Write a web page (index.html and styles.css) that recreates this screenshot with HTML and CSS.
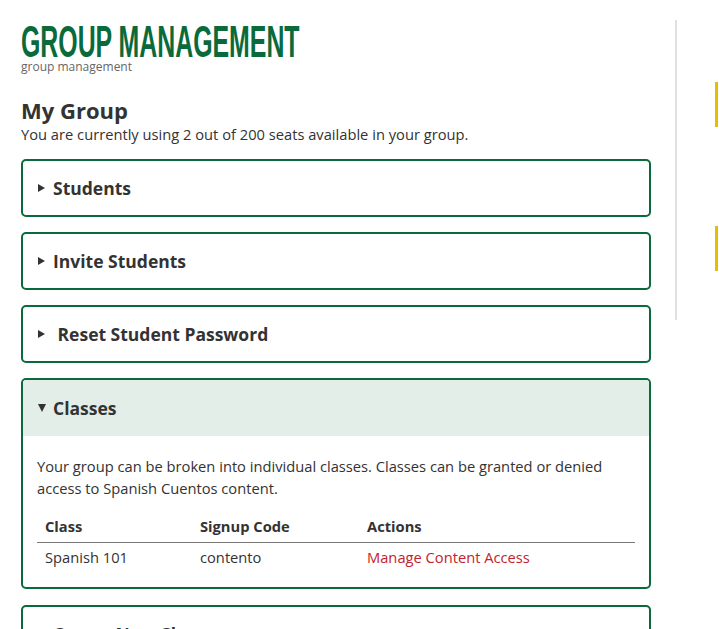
FILE: index.html
```html
<!DOCTYPE html>
<html lang="en">
<head>
    <meta charset="UTF-8">
    <meta name="viewport" content="width=device-width, initial-scale=1.0">
    <title>Group Management</title>
    <link rel="stylesheet" href="styles.css">
</head>
<body>
    <div class="page">
        <div class="main">
            <h1 class="page-title"><span>Group Management</span></h1>
            <div class="page-subtitle">group management</div>

            <h2 class="section-title">My Group</h2>
            <p class="seats">You are currently using 2 out of 200 seats available in your group.</p>

            <details class="panel">
                <summary>Students</summary>
            </details>

            <details class="panel">
                <summary>Invite Students</summary>
            </details>

            <details class="panel">
                <summary>&nbsp;Reset Student Password</summary>
            </details>

            <details class="panel" open>
                <summary>Classes</summary>
                <div class="panel-body">
                    <p>Your group can be broken into individual classes. Classes can be granted or denied access to Spanish Cuentos content.</p>
                    <table class="class-table">
                        <thead>
                            <tr>
                                <th class="col-class">Class</th>
                                <th class="col-code">Signup Code</th>
                                <th>Actions</th>
                            </tr>
                        </thead>
                        <tbody>
                            <tr>
                                <td>Spanish 101</td>
                                <td>contento</td>
                                <td><a href="#">Manage Content Access</a></td>
                            </tr>
                        </tbody>
                    </table>
                </div>
            </details>

            <details class="panel">
                <summary>Create New Class</summary>
            </details>
        </div>

        <div class="sidebar">
            <div class="side-item"></div>
            <div class="side-item"></div>
        </div>
    </div>
</body>
</html>
```

FILE: styles.css
```css
:root {
    --green: #0a6a3b;
    --green-light: #e4eee8;
    --text: #333;
    --muted: #666;
    --red: #c4232b;
    --yellow: #e6bd00;
    --rule: #e0e0e0;
}

* {
    box-sizing: border-box;
}

body {
    margin: 0;
    font-family: 'Open Sans', sans-serif;
    color: var(--text);
    background: #fff;
    overflow: hidden;
}

.page {
    display: flex;
    align-items: flex-start;
    padding: 24px 0 0 21px;
}

.main {
    width: 630px;
    flex-shrink: 0;
}

/* condensed title, no Bebas available so squeeze a narrow face */
.page-title {
    margin: 0;
    font-family: 'Liberation Sans Narrow', 'Liberation Sans', sans-serif;
    font-weight: 700;
    font-size: 44px;
    line-height: 36px;
    height: 36px;
    text-transform: uppercase;
    color: var(--green);
    white-space: nowrap;
}

.page-title span {
    display: inline-block;
    transform: scaleX(0.565);
    transform-origin: left center;
}

.page-subtitle {
    font-size: 12px;
    line-height: 14px;
    color: var(--muted);
}

.section-title {
    margin: 22px 0 0;
    font-size: 22px;
    line-height: 28px;
    font-weight: 700;
}

.seats {
    margin: 0 0 15px;
    font-size: 14.7px;
    line-height: 20px;
}

.panel {
    border: 2px solid var(--green);
    border-radius: 5px;
    margin-bottom: 15px;
    overflow: hidden;
}

.panel[open] {
    margin-bottom: 16px;
}

.panel summary {
    display: flex;
    align-items: center;
    list-style: none;
    padding: 15px;
    font-size: 17.5px;
    line-height: 24px;
    font-weight: 700;
    cursor: pointer;
}

.panel summary::-webkit-details-marker {
    display: none;
}

.panel summary::before {
    content: "";
    flex-shrink: 0;
    width: 0;
    height: 0;
    border-left: 7px solid var(--text);
    border-top: 4px solid transparent;
    border-bottom: 4px solid transparent;
    margin-right: 8px;
}

.panel[open] summary {
    background: var(--green-light);
    padding-top: 16px;
    padding-bottom: 16px;
}

.panel[open] summary::before {
    border-left: 4px solid transparent;
    border-right: 4px solid transparent;
    border-top: 8px solid var(--text);
    border-bottom: 0;
    margin-right: 7px;
}

.panel-body {
    padding: 19px 14px 16px;
}

.panel-body p {
    margin: 0 0 11px;
    font-size: 14.7px;
    line-height: 22px;
}

.class-table {
    width: 100%;
    border-collapse: collapse;
    font-size: 14.7px;
}

.class-table th {
    text-align: left;
    font-weight: 700;
    padding: 6px 8px;
    line-height: 20px;
    border-bottom: 1px solid #777;
}

.class-table td {
    padding: 3px 8px;
    line-height: 22px;
}

.class-table .col-class {
    width: 155px;
}

.class-table .col-code {
    width: 167px;
}

.class-table a {
    color: var(--red);
    text-decoration: none;
}

.sidebar {
    margin-left: 24px;
    margin-top: -4px;
    height: 300px;
    border-left: 2px solid var(--rule);
    padding-left: 38px;
    padding-top: 62px;
}

.side-item {
    width: 40px;
    height: 45px;
    border-left: 3px solid var(--yellow);
    margin-bottom: 99px;
}
```
